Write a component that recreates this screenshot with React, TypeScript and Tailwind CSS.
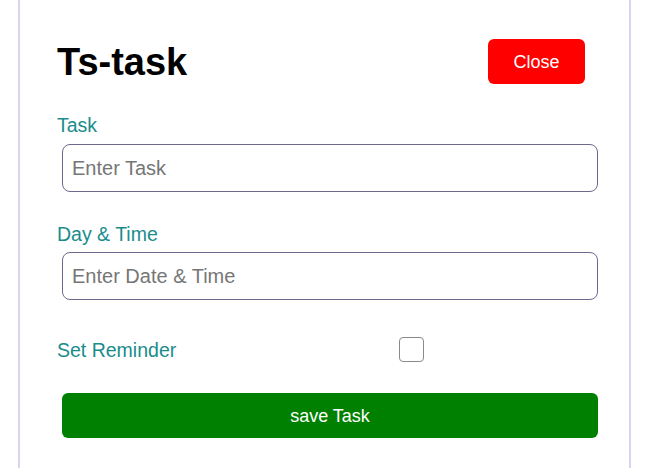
export default function App() {
  return (
    <div className="min-h-[468px] bg-white font-['Liberation_Sans'] leading-normal">
      <div className="mx-[18px] min-h-[468px] border-x-2 border-[#d8d5f3] pl-[37px] pr-[32px] pt-[39px]">
        {/* Header */}
        <div className="flex items-center justify-between pr-[12px]">
          <h1 className="text-[38px] leading-[44px] font-bold text-black">Ts-task</h1>
          <button className="h-[45px] w-[97px] rounded-[6px] bg-[#ff0000] text-[18px] leading-[22px] text-white">
            Close
          </button>
        </div>

        {/* Task */}
        <label className="mt-[30px] block text-[19.5px] leading-[22px] text-[#1a8c8c]">Task</label>
        <input
          type="text"
          placeholder="Enter Task"
          className="mt-[8px] ml-[5px] block h-[48px] w-[536px] rounded-[8px] border-[1.5px] border-[#6c6a8c] px-[9px] text-[20px] leading-[24px] placeholder:text-[#767676] outline-none"
        />

        {/* Day & Time */}
        <label className="mt-[31px] block text-[19.5px] leading-[22px] text-[#1a8c8c]">Day &amp; Time</label>
        <input
          type="text"
          placeholder="Enter Date & Time"
          className="mt-[7px] ml-[5px] block h-[48px] w-[536px] rounded-[8px] border-[1.5px] border-[#6c6a8c] px-[9px] text-[20px] leading-[24px] placeholder:text-[#767676] outline-none"
        />

        {/* Reminder */}
        <div className="mt-[37px] flex h-[25px] items-center">
          <label className="w-[342px] text-[19.5px] leading-[22px] text-[#1a8c8c]">Set Reminder</label>
          <input
            type="checkbox"
            className="h-[25px] w-[25px] appearance-none rounded-[4px] border-[1.5px] border-[#8a8a8a] bg-white"
          />
        </div>

        {/* Save */}
        <button className="mt-[31px] ml-[5px] block h-[45px] w-[536px] rounded-[6px] bg-[#008000] text-[18px] leading-[22px] text-white">
          save Task
        </button>
      </div>
    </div>
  );
}
